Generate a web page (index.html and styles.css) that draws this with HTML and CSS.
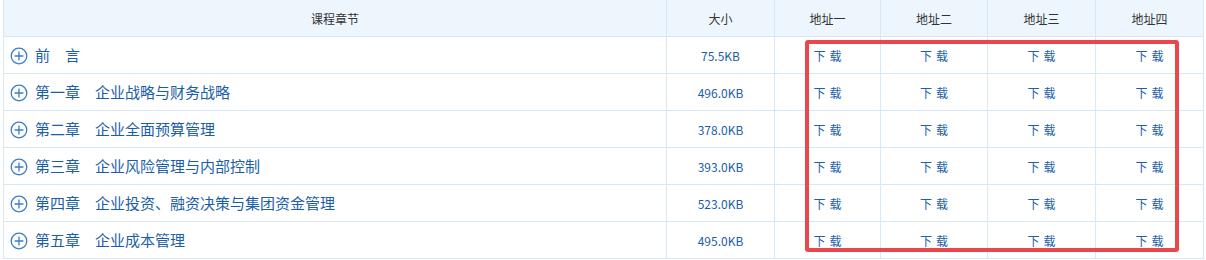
FILE: index.html
```html
<!DOCTYPE html>
<html lang="zh-CN">
<head>
<meta charset="utf-8">
<title>课程章节</title>
<link rel="stylesheet" href="styles.css">
</head>
<body>
<div class="wrap">
  <div class="grid">
    <div class="th">课程章节</div>
    <div class="th">大小</div>
    <div class="th">地址一</div>
    <div class="th">地址二</div>
    <div class="th">地址三</div>
    <div class="th">地址四</div>

    <div class="td chap"><svg class="plus" viewBox="0 0 18 18"><circle cx="9" cy="9" r="7.8"/><path d="M9 4.6v8.8M4.6 9h8.8"/></svg><span>前　言</span></div>
    <div class="td size">75.5KB</div>
    <div class="td dl">下 载</div><div class="td dl">下 载</div><div class="td dl">下 载</div><div class="td dl">下 载</div>

    <div class="td chap"><svg class="plus" viewBox="0 0 18 18"><circle cx="9" cy="9" r="7.8"/><path d="M9 4.6v8.8M4.6 9h8.8"/></svg><span>第一章　企业战略与财务战略</span></div>
    <div class="td size">496.0KB</div>
    <div class="td dl">下 载</div><div class="td dl">下 载</div><div class="td dl">下 载</div><div class="td dl">下 载</div>

    <div class="td chap"><svg class="plus" viewBox="0 0 18 18"><circle cx="9" cy="9" r="7.8"/><path d="M9 4.6v8.8M4.6 9h8.8"/></svg><span>第二章　企业全面预算管理</span></div>
    <div class="td size">378.0KB</div>
    <div class="td dl">下 载</div><div class="td dl">下 载</div><div class="td dl">下 载</div><div class="td dl">下 载</div>

    <div class="td chap"><svg class="plus" viewBox="0 0 18 18"><circle cx="9" cy="9" r="7.8"/><path d="M9 4.6v8.8M4.6 9h8.8"/></svg><span>第三章　企业风险管理与内部控制</span></div>
    <div class="td size">393.0KB</div>
    <div class="td dl">下 载</div><div class="td dl">下 载</div><div class="td dl">下 载</div><div class="td dl">下 载</div>

    <div class="td chap"><svg class="plus" viewBox="0 0 18 18"><circle cx="9" cy="9" r="7.8"/><path d="M9 4.6v8.8M4.6 9h8.8"/></svg><span>第四章　企业投资、融资决策与集团资金管理</span></div>
    <div class="td size">523.0KB</div>
    <div class="td dl">下 载</div><div class="td dl">下 载</div><div class="td dl">下 载</div><div class="td dl">下 载</div>

    <div class="td chap"><svg class="plus" viewBox="0 0 18 18"><circle cx="9" cy="9" r="7.8"/><path d="M9 4.6v8.8M4.6 9h8.8"/></svg><span>第五章　企业成本管理</span></div>
    <div class="td size">495.0KB</div>
    <div class="td dl">下 载</div><div class="td dl">下 载</div><div class="td dl">下 载</div><div class="td dl">下 载</div>
  </div>
  <div class="mark"></div>
</div>
</body>
</html>
```

FILE: styles.css
```css
html, body {
  margin: 0;
  padding: 0;
  background: #fff;
}
body {
  font-family: "Noto Sans CJK SC", "Noto Sans", sans-serif;
}
.wrap {
  position: relative;
  padding-left: 3px;
}
.grid {
  display: grid;
  grid-template-columns: 662px 107px 105px 106px 107px 107px;
  grid-auto-rows: 36px;
  gap: 1px;
  width: max-content;
  background: #d6e8f8;
  border: 1px solid #d6e8f8;
  border-top: 0;
}
.th {
  background: #eef6fd;
  color: #333;
  font-size: 12px;
  display: flex;
  align-items: center;
  justify-content: center;
}
.td {
  background: #fff;
  display: flex;
  align-items: center;
}
.chap {
  padding-left: 6px;
  gap: 7px;
  font-size: 15px;
  color: #1b5ea8;
}
.chap span {
  margin-bottom: 1px;
}
.plus {
  width: 18px;
  height: 18px;
  margin-top: 2px;
  flex: none;
  fill: none;
  stroke: #3a7ec6;
  stroke-width: 1.3;
}
.size {
  justify-content: center;
  font-size: 12px;
  color: #1b5ea8;
}
.dl {
  justify-content: center;
  font-size: 12px;
  word-spacing: 1.5px;
  color: #1d5fa8;
}
.mark {
  position: absolute;
  left: 805px;
  top: 40px;
  width: 366px;
  height: 204px;
  border: 4px solid #e8474b;
  border-radius: 3px;
}
```
